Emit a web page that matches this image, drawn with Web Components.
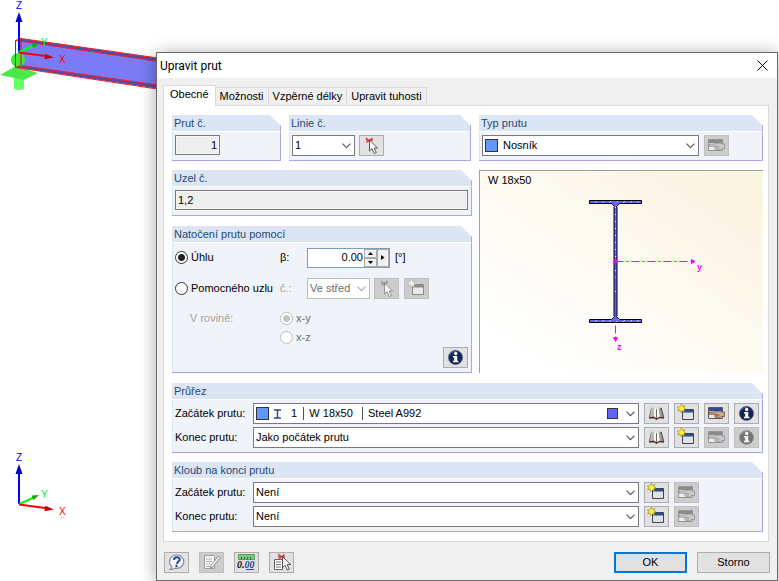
<!DOCTYPE html>
<html lang="cs">
<head>
<meta charset="utf-8">
<title>Upravit prut</title>
<style>
  body {
    margin: 0;
    background: #fff;
    font: 11px/13px "Liberation Sans", Arial, sans-serif;
    color: #000;
  }
</style>
</head>
<body>
<model-desktop>
  <edit-dialog heading="Upravit prut">
    <tab-bar slot="tabs" items="Obecné,Možnosti,Vzpěrné délky,Upravit tuhosti"></tab-bar>
    <general-page></general-page>
    <dialog-footer slot="footer"></dialog-footer>
  </edit-dialog>
</model-desktop>

<script>
const arrow = (x, y) =>
  `<path d="M${x} ${y}v11l2.600-2.300 2.200 4.800 2-1-2.200-4.500h3.400z" fill="#fff" stroke="#333" stroke-width=".8"/>`;
const hand = `
  <path d="M3.500 3.500h14v11h-14z" fill="#e4e4e8" stroke="#56585e"/>
  <path d="M4 4h13v3H4z" fill="#2d4c94"/>
  <path d="M4 8.200c3-.4 5 .1 7-.7 2-.6 3.500-.4 5 .3l3.500.2v4.500l-3 .2c-1.500 1.200-3.500 1.600-5.500.8-1.200-.5-1.600-1.300-.8-2.200l1-1.100H4z" fill="#d0a88c" stroke="#5d3a2a" stroke-width=".7"/>
  <path d="M10.500 11.500l3-1.500M11.500 12.700l3-1.600" stroke="#5d3a2a" stroke-width=".6"/>`;

const ICONS = {
  pick: `<path d="M6 2l6 5.500M12.500 2L6.500 6.500M6 4h7" stroke="#d84040" stroke-width="1.400"/>${arrow(9.5, 4)}`,
  create: `
    <path d="M7.500 5.500h11v10h-11z" fill="#dfe1e8" stroke="#3e424c"/>
    <path d="M8 6h10v2.500H8z" fill="#2d4c94"/>
    <path d="M6.500 0l1.200 2.500L10 1.500 9 4l2 1-2.200.7.6 2.300-2.400-1.100L5.500 8.500 5 6.200l-2.500.6 1.400-2L2.500 3l2.300-.2z" fill="#ffee38" stroke="#8c861e" stroke-width=".6"/>`,
  hand,
  book: `
    <path d="M3.800 13.500L6 4h4v10z" fill="#70716e"/>
    <path d="M6 4l3-.8 2 1.800v9.500L9 12.500l-4 .8z" fill="#b9b8b0"/>
    <path d="M9 3.200l2.500 2V15L9 12.500z" fill="#f8f7f2"/>
    <path d="M11.500 5.200l2-2 1.300 9.500-3.300 2.300z" fill="#fff"/>
    <path d="M13.500 3.200l2.700.8 2.300 9.300-3.700-.6z" fill="#9c9b96"/>
    <path d="M11.500 5v10" stroke="#45443f" stroke-width=".8"/>
    <path d="M16.200 4l2.500 9.500" stroke="#45443f"/>
    <path d="M4 14l5-.5 2.500 1.700 3-1.700 4.500.5" stroke="#4e302b" stroke-width="1.300"/>`,
  info: `
    <circle cx="11.500" cy="9.500" r="7.200" fill="#162552" stroke="#6c7aa0" stroke-width=".6"/>
    <path d="M5 8a6.800 6.800 0 0 1 9-4.800C10 3 7 5 5 8z" fill="#536ba4"/>
    <circle cx="11.700" cy="5.500" r="1.700" fill="#fff"/>
    <path d="M9 8h4.200v4.800h1.200v1.400H9v-1.400h1.200V9.400H9z" fill="#fff"/>`,
  help: `
    <path d="M11.700 2a7 6.700 0 1 1-2 13.100c-1.500 1.200-3 1.500-4.500 1.400 1.100-.8 1.600-1.700 1.700-2.800A6.700 6.700 0 0 1 11.700 2z" fill="#f2f4fa" stroke="#8a8e98" stroke-width="1.200"/>
    <path d="M9 6.900c.1-3.600 5.800-3.500 5.700-.4-.1 2-2.500 2.200-2.700 4.300" fill="none" stroke="#27469b" stroke-width="2"/>
    <circle cx="11.500" cy="13" r="1.200" fill="#27469b"/>`,
  notes: `
    <path d="M4.500 2.500h9l1 1v12h-10z" fill="#fff" stroke="#62625e"/>
    <path d="M6 6h6M6 8.500h6M6 11h4M6 13.500h5" stroke="#85857f"/>
    <path d="M18.500 3l1.500 1.500-7 9.300-2.500 1.200.5-2.700z" fill="#eee" stroke="#444" stroke-width=".9"/>`,
  units: `
    <path d="M3.500 1.500h16v5h-16z" fill="#7dc680" stroke="#5aa35f"/>
    <path d="M6.500 4v2.500M9.500 4v2.500M12.500 4v2.500M15.500 4v2.500" stroke="#286c30"/>
    <path d="M11 16.500h8" stroke="#27469b"/>
    <text x="2" y="15" font-family="Liberation Serif, serif" font-size="10" font-weight="bold" font-style="italic" fill="#111">0.<tspan fill="#27469b">00</tspan></text>`,
  tree: `
    <path d="M4.500 6.500h8v10h-8z" fill="#fff" stroke="#666"/>
    <path d="M6 9h5M6 11.500h5M6 14h5" stroke="#777"/>
    <path d="M8 1l7 5.500M14.500 1.500L9 6M8 3.800h7" stroke="#d84040" stroke-width="1.400"/>${arrow(12.5, 3.5)}`
};

class IconButton extends HTMLElement {
  constructor() {
    super();
    this.attachShadow({ mode: "open" });
  }

  connectedCallback() {
    const disabled = this.hasAttribute("disabled") ? "disabled" : "";
    this.shadowRoot.innerHTML = `
    <style>
      :host { display: block; width: 25px; flex: none; }
      button {
        display: block;
        width: 100%;
        padding: 0;
        border: 1px solid #adadad;
        background: #e1e1e1;
      }
      button:hover { border-color: #0078d7; background: #e5f1fb; }
      button:disabled { border-color: #bfbfbf; background: #ccc; }
      button:disabled svg { filter: grayscale(1) contrast(0.6) brightness(1.3); opacity: 0.8; }
      svg { display: block; margin: auto; }
    </style>
    <button type="button" aria-label="${this.getAttribute("label")}" ${disabled}>
      <svg width="23" height="19" viewBox="0 0 23 19" fill="none">${ICONS[this.getAttribute("icon")]}</svg>
    </button>`;
  }
}
customElements.define("icon-button", IconButton);

// Drop-down with an optional label; slotted art is laid over the text
class ComboField extends HTMLElement {
  constructor() {
    super();
    this.attachShadow({ mode: "open" });
  }

  connectedCallback() {
    const label = this.getAttribute("label");
    const disabled = this.hasAttribute("disabled") ? "disabled" : "";
    const name = label ? "" : `aria-label="${this.getAttribute("name")}"`;
    this.shadowRoot.innerHTML = `
    <style>
      :host { display: flex; align-items: center; min-width: 0; }
      label { width: var(--label-width, 78px); flex: none; }
      .box { display: grid; flex: 1; min-width: 0; }
      .box > * { grid-area: 1 / 1; }
      select {
        appearance: none;
        width: 100%;
        height: 21px;
        margin: 0;
        padding: 0 18px 0 var(--text-start, 2px);
        border: 1px solid #7a7a7a;
        border-radius: 0;
        background: #fff;
        color: #000;
        font: inherit;
      }
      select:disabled { border-color: #bcbcbc; color: #6d6d6d; opacity: 1; }
      :host([disabled]) label { color: #a0a0a0; text-shadow: 1px 1px #fff; }
      :host([disabled]) path { stroke: #aaa; }
      .art {
        display: flex;
        align-items: center;
        padding: 0 21px 0 3px;
        pointer-events: none;
      }
      .arrow { justify-self: end; align-self: center; margin-right: 4px; pointer-events: none; }
    </style>
    ${label ? `<label for="list">${label}</label>` : ""}
    <div class="box">
      <select id="list" ${name} ${disabled}><option>${this.getAttribute("value")}</option></select>
      <div class="art"><slot></slot></div>
      <svg class="arrow" width="9" height="6" viewBox="0 0 9 6"><path d="M.5.700l4 4 4-4" fill="none" stroke="#555" stroke-width="1.100"/></svg>
    </div>`;
  }
}
customElements.define("combo-field", ComboField);

class GroupBox extends HTMLElement {
  constructor() {
    super();
    this.attachShadow({ mode: "open" });
  }

  connectedCallback() {
    this.shadowRoot.innerHTML = `
    <style>
      :host {
        display: flex;
        flex-direction: column;
        box-sizing: border-box;
        border-right: 1px solid #a6a6ea;
        border-bottom: 1px solid #a6a6ea;
        background: #f0f3f9;
        clip-path: polygon(0 0, calc(100% - 11px) 0, 100% 11px, 100% 100%, 0 100%);
      }
      header {
        height: 16px;
        padding-left: 2px;
        margin-right: -1px;
        border-bottom: 1px solid #fff;
        border-right: 1px solid #a6a6ea;
        background: #dce5f4;
        color: #1f4a75;
        line-height: 17px;
      }
      .body {
        display: flex;
        flex-direction: column;
        flex: 1;
        gap: 3px;
        padding: 3px 3px 4px 2px;
        border-left: 1px solid #dce5f4;
      }
    </style>
    <header>${this.getAttribute("heading")}</header>
    <div class="body"><slot></slot></div>`;
  }
}
customElements.define("group-box", GroupBox);

class TabBar extends HTMLElement {
  constructor() {
    super();
    this.attachShadow({ mode: "open" });
  }

  connectedCallback() {
    const tabs = this.getAttribute("items").split(",").map((text, i) =>
      `<button type="button" role="tab" aria-selected="${i === 0}">${text}</button>`);
    this.shadowRoot.innerHTML = `
    <style>
      :host { display: flex; align-items: flex-end; }
      button {
        height: 18px;
        padding: 0 4px;
        border: 1px solid #d9d9d9;
        border-width: 1px 1px 0 0;
        background: #f0f0f0;
        color: #000;
        font: inherit;
      }
      [aria-selected="true"] {
        height: 21px;
        margin-bottom: -1px;
        padding: 0 6px 3px;
        border-left-width: 1px;
        background: #fff;
      }
    </style>
    ${tabs.join("")}`;
    this.setAttribute("role", "tablist");
  }
}
customElements.define("tab-bar", TabBar);

class AngleSpin extends HTMLElement {
  constructor() {
    super();
    this.attachShadow({ mode: "open" });
    this.shadowRoot.innerHTML = `
    <style>
      :host { display: flex; align-items: center; }
      label { width: 27px; }
      .spin {
        display: flex;
        width: 81px;
        height: 18px;
        border: 1px solid #7a9cbf;
        background: #fff;
        margin-right: 5px;
      }
      input {
        flex: 1;
        min-width: 0;
        padding: 0;
        border: 0;
        text-align: right;
        font: inherit;
      }
      .steps { display: grid; width: 13px; margin-left: 1px; }
      button {
        display: grid;
        place-items: center;
        padding: 0;
        border: 1px solid #aaa;
        background: #f0f0f0;
      }
      .more { width: 12px; }
      svg { display: block; }
    </style>
    <label for="beta">β:</label>
    <div class="spin">
      <input id="beta" type="text" value="0.00">
      <div class="steps">
        <button type="button" aria-label="+"><svg width="5" height="3"><path d="M0 3l2.500-3L5 3z"/></svg></button>
        <button type="button" aria-label="-"><svg width="5" height="3"><path d="M0 0l2.500 3L5 0z"/></svg></button>
      </div>
      <button type="button" class="more" aria-label="…"><svg width="4" height="5"><path d="M0 0l3.500 2.500L0 5z"/></svg></button>
    </div>
    <span>[°]</span>`;
  }
}
customElements.define("angle-spin", AngleSpin);

class RotationOptions extends HTMLElement {
  constructor() {
    super();
    this.attachShadow({ mode: "open" });
    this.shadowRoot.innerHTML = `
    <style>
      :host { display: flex; flex-direction: column; flex: 1; padding-top: 1px; }
      .row { display: flex; align-items: center; height: 21px; margin-bottom: 10px; }
      .row > label { width: 105px; }
      label { display: flex; align-items: center; gap: 3px; }
      input {
        appearance: none;
        width: 13px;
        height: 13px;
        margin: 0;
        border: 1px solid #333;
        border-radius: 50%;
        background: #fff;
      }
      input:checked { background: radial-gradient(circle, #222 3px, #fff 4px); }
      input:disabled { border-color: #bcbcbc; }
      input:disabled:checked { background: radial-gradient(circle, #c4c4c4 3px, #fff 4px); }
      combo-field { width: 90px; --label-width: 27px; margin-right: 4px; }
      icon-button + icon-button { margin-left: 5px; }
      .plane { display: flex; line-height: 19px; }
      .plane > span { width: 90px; padding-left: 15px; color: #a0a0a0; text-shadow: 1px 1px #fff; }
      .plane label { color: #6d6d6d; }
      .info { margin: auto 0 0 auto; }
    </style>
    <div class="row">
      <label><input type="radio" name="mode" checked>Úhlu</label>
      <angle-spin></angle-spin>
    </div>
    <div class="row">
      <label><input type="radio" name="mode">Pomocného uzlu</label>
      <combo-field label="č.:" value="Ve střed" disabled></combo-field>
      <icon-button icon="pick" label="Vybrat" disabled></icon-button>
      <icon-button icon="create" label="Nový" disabled></icon-button>
    </div>
    <div class="plane">
      <span>V rovině:</span>
      <div>
        <label><input type="radio" name="plane" checked disabled>x-y</label>
        <label><input type="radio" name="plane" disabled>x-z</label>
      </div>
    </div>
    <icon-button class="info" icon="info" label="Info"></icon-button>`;
  }
}
customElements.define("rotation-options", RotationOptions);

class SectionPreview extends HTMLElement {
  constructor() {
    super();
    this.attachShadow({ mode: "open" });
    this.shadowRoot.innerHTML = `
    <style>
      :host {
        display: grid;
        border: 1px solid #a0a0a0;
        border-width: 1px 0 0 1px;
        background: linear-gradient(35deg, #fff 10%, #fdf9ee 60%, #fcf5e6 80%, #f8f5e0);
      }
      .name, svg { grid-area: 1 / 1; }
      .name { padding: 3px 8px; }
    </style>
    <span class="name">W 18x50</span>
    <svg width="282" height="201" viewBox="0 0 282 201">
      <defs>
        <pattern id="hatch" width="7" height="7" patternUnits="userSpaceOnUse">
          <path d="M0 0h7v7H0z" fill="#6464ff"/>
          <path d="M0 7l7-7" stroke="#fff" stroke-opacity=".7"/>
        </pattern>
      </defs>
      <path d="M109.500 29.500h52v3h-22l-3 3v110l3 3h22v3h-52v-3h22l3-3v-110l-3-3h-22z" fill="url(#hatch)" stroke="#000"/>
      <path d="M131 31h9l-4.500 4zM131 150h9l-4.500-4z" fill="#6464ff"/>
      <path d="M134 36v109M137 36v109" stroke="#000"/>
      <path d="M135.500 36v109" stroke="#6464ff" stroke-width="2"/>
      <path d="M135.500 36v109" stroke="#fff" stroke-dasharray="1 6"/>
      <g stroke="#f0f" fill="#f0f">
        <path d="M135.500 90.500h76" stroke-dasharray="8 3 2 3"/>
        <path d="M135.500 90.500v76" stroke-dasharray="8 3 2 3"/>
        <circle cx="135.500" cy="90.500" r="1.200"/>
        <path d="M211.500 88.500v4l3.500-2zM133.500 166.500h4l-2 4z"/>
      </g>
      <g fill="#f0f" font-family="Liberation Sans" font-size="9" font-weight="bold">
        <text x="217" y="99">y</text>
        <text x="137" y="179">z</text>
      </g>
    </svg>`;
  }
}
customElements.define("section-preview", SectionPreview);

class GeneralPage extends HTMLElement {
  constructor() {
    super();
    this.attachShadow({ mode: "open" });
    this.shadowRoot.innerHTML = `
    <style>
      :host { display: flex; flex-direction: column; gap: 9px; padding: 9px 5px 9px 8px; }
      .top { display: grid; grid-template-columns: 109px 182px 1fr; column-gap: 8px; }
      .middle { display: grid; grid-template-columns: 300px 1fr; column-gap: 7px; margin-bottom: 1px; }
      .middle > div { display: grid; grid-template-rows: auto 1fr; gap: 10px; }
      .row { display: flex; gap: 4px; }
      .line { display: grid; grid-template-columns: 1fr repeat(4, 25px); column-gap: 5px; }
      .type { display: grid; grid-template-columns: 1fr 25px 25px; column-gap: 5px; }
      .number { width: 63px; }
      .member { --text-start: 20px; }
      .section { --text-start: 37px; }
      input {
        box-sizing: border-box;
        height: 20px;
        margin: 0 0 1px;
        padding: 0 2px;
        border: 1px solid #7a7a7a;
        background: #eee;
        box-shadow: inset 0 0 0 1px #f8f8f8;
        color: #000;
        font: inherit;
      }
      #member { width: 45px; text-align: right; }
      .swatch { width: 11px; height: 11px; border: 1px solid #333; background: #6496ff; }
      .colour { width: 9px; height: 9px; margin-left: auto; background: #6464ff; }
      .shape { margin-left: 5px; }
      .bar { width: 1px; height: 13px; background: #555; margin-left: 22px; }
      .bar + .bar { margin-left: 58px; }
    </style>
    <div class="top">
      <group-box heading="Prut č.">
        <input id="member" aria-label="Prut č." value="1" readonly>
      </group-box>
      <group-box heading="Linie č.">
        <div class="row">
          <combo-field class="number" name="Linie č." value="1"></combo-field>
          <icon-button icon="pick" label="Vybrat"></icon-button>
        </div>
      </group-box>
      <group-box heading="Typ prutu">
        <div class="type">
          <combo-field class="member" name="Typ prutu" value="Nosník"><i class="swatch"></i></combo-field>
          <icon-button icon="hand" label="Upravit" disabled></icon-button>
        </div>
      </group-box>
    </div>
    <div class="middle">
      <div>
        <group-box heading="Uzel č.">
          <input aria-label="Uzel č." value="1,2" readonly>
        </group-box>
        <group-box heading="Natočení prutu pomocí">
          <rotation-options></rotation-options>
        </group-box>
      </div>
      <section-preview></section-preview>
    </div>
    <group-box heading="Průřez">
      <div class="line">
        <combo-field class="section" label="Začátek prutu:" value="1&nbsp;&nbsp;&nbsp;&nbsp;W 18x50&nbsp;&nbsp;&nbsp;&nbsp;&nbsp;Steel A992">
          <i class="swatch"></i>
          <svg class="shape" width="7" height="10"><path d="M0 1h7M0 9h7M3.500 1v8" stroke="#33447a" stroke-width="1.400"/></svg>
          <i class="bar"></i>
          <i class="bar"></i>
          <i class="swatch colour"></i>
        </combo-field>
        <icon-button icon="book" label="Knihovna"></icon-button>
        <icon-button icon="create" label="Nový"></icon-button>
        <icon-button icon="hand" label="Upravit"></icon-button>
        <icon-button icon="info" label="Info"></icon-button>
      </div>
      <div class="line">
        <combo-field label="Konec prutu:" value="Jako počátek prutu"></combo-field>
        <icon-button icon="book" label="Knihovna"></icon-button>
        <icon-button icon="create" label="Nový"></icon-button>
        <icon-button icon="hand" label="Upravit" disabled></icon-button>
        <icon-button icon="info" label="Info" disabled></icon-button>
      </div>
    </group-box>
    <group-box heading="Kloub na konci prutu">
      <div class="line">
        <combo-field label="Začátek prutu:" value="Není"></combo-field>
        <icon-button icon="create" label="Nový"></icon-button>
        <icon-button icon="hand" label="Upravit" disabled></icon-button>
      </div>
      <div class="line">
        <combo-field label="Konec prutu:" value="Není"></combo-field>
        <icon-button icon="create" label="Nový"></icon-button>
        <icon-button icon="hand" label="Upravit" disabled></icon-button>
      </div>
    </group-box>`;
  }
}
customElements.define("general-page", GeneralPage);

class DialogFooter extends HTMLElement {
  constructor() {
    super();
    this.attachShadow({ mode: "open" });
    this.shadowRoot.innerHTML = `
    <style>
      :host { display: flex; gap: 10px; padding: 10px 7px 7px; }
      button {
        box-sizing: border-box;
        width: 73px;
        padding: 0;
        border: 1px solid #adadad;
        background: #e1e1e1;
        color: #000;
        font: inherit;
      }
      .ok { margin-left: auto; border: 2px solid #0078d7; }
    </style>
    <icon-button icon="help" label="Nápověda"></icon-button>
    <icon-button icon="notes" label="Komentář" disabled></icon-button>
    <icon-button icon="units" label="Jednotky"></icon-button>
    <icon-button icon="tree" label="Převzít"></icon-button>
    <button type="button" class="ok">OK</button>
    <button type="button">Storno</button>`;
  }
}
customElements.define("dialog-footer", DialogFooter);

class EditDialog extends HTMLElement {
  constructor() {
    super();
    this.attachShadow({ mode: "open" });
  }

  connectedCallback() {
    this.shadowRoot.innerHTML = `
    <style>
      :host {
        display: block;
        border: 1px solid #6a6a6a;
        background: #f0f0f0;
        box-shadow: 0 2px 16px rgba(0, 0, 0, 0.35);
      }
      header {
        display: flex;
        align-items: center;
        justify-content: space-between;
        height: 25px;
        padding: 0 9px 0 3px;
        background: #fff;
        font: 12px Roboto, "Liberation Sans", sans-serif;
      }
      header button { padding: 0; border: 0; background: none; }
      svg { display: block; }
      .tabs { padding: 7px 8px 0 6px; }
      main { margin: 0 8px 0 6px; border: 1px solid #d9d9d9; background: #fff; }
      ::slotted(tab-bar) { position: relative; }
    </style>
    <header>
      <span>${this.getAttribute("heading")}</span>
      <button type="button" aria-label="Zavřít">
        <svg width="11" height="11"><path d="M.5.500l10 10M10.500.500l-10 10" stroke="#000"/></svg>
      </button>
    </header>
    <div class="tabs"><slot name="tabs"></slot></div>
    <main><slot></slot></main>
    <slot name="footer"></slot>`;
  }
}
customElements.define("edit-dialog", EditDialog);

// 3D work area behind the dialog
class ModelDesktop extends HTMLElement {
  constructor() {
    super();
    this.attachShadow({ mode: "open" });
    const triad = `
      <path d="M19 52V22" stroke="#00f" stroke-width="2"/>
      <path d="M19 12l3.500 10h-7z" fill="#0000c8"/>
      <path d="M19 52l14-6" stroke="#0f0" stroke-width="2"/>
      <path d="M39 43l-5.500 5-2-4.500z" fill="#12a012"/>
      <path d="M19 52.500l26 3.500" stroke="#f00" stroke-width="2"/>
      <path d="M54 57.500l-9.500 1.800.8-5.600z" fill="#c80000"/>
      <text x="16" y="9" fill="#00f">Z</text>
      <text x="41" y="46" fill="#0e0">Y</text>
      <text x="59" y="63" fill="#f00">X</text>`;
    this.shadowRoot.innerHTML = `
    <style>
      :host { display: block; position: relative; height: 100vh; min-height: 581px; overflow: hidden; }
      svg { position: absolute; left: 0; font: 10px "Liberation Sans", Arial, sans-serif; }
      .beam { top: 0; }
      .axes { bottom: 59px; }
      ::slotted(edit-dialog) { position: absolute; top: 52px; left: 156px; right: 1px; }
    </style>
    <svg class="beam" width="200" height="100" viewBox="0 0 200 100" fill="none">
      <path d="M14 78h10v11q-5 2-10 0z" fill="#6f6"/>
      <path d="M0 75l16-9 22 7-14 7z" fill="#4ae84a"/>
      <path d="M18 40l182 26v26L18 67z" fill="#7b7bf6"/>
      <path d="M16 40.500l5-2L200 64v4zM16 67.500l5-2L200 91v4z" fill="#5a4a9a"/>
      <path d="M16 40.500L200 67.500M21 38.500L200 64M16 67.500L200 95.500M21 65.500L200 91" stroke="#f02030"/>
      <circle cx="18" cy="60" r="7" fill="#3be83b"/>
      <path d="M15.500 40.500l5.500-2v27l-5.500 2z" stroke="#f00"/>
      ${triad}
    </svg>
    <svg class="axes" width="80" height="70" viewBox="0 0 80 70" fill="none">${triad}<path d="M61 65.500h1M63 65.500h1" stroke="#f88"/></svg>
    <slot></slot>`;
  }
}
customElements.define("model-desktop", ModelDesktop);
</script>
</body>
</html>
